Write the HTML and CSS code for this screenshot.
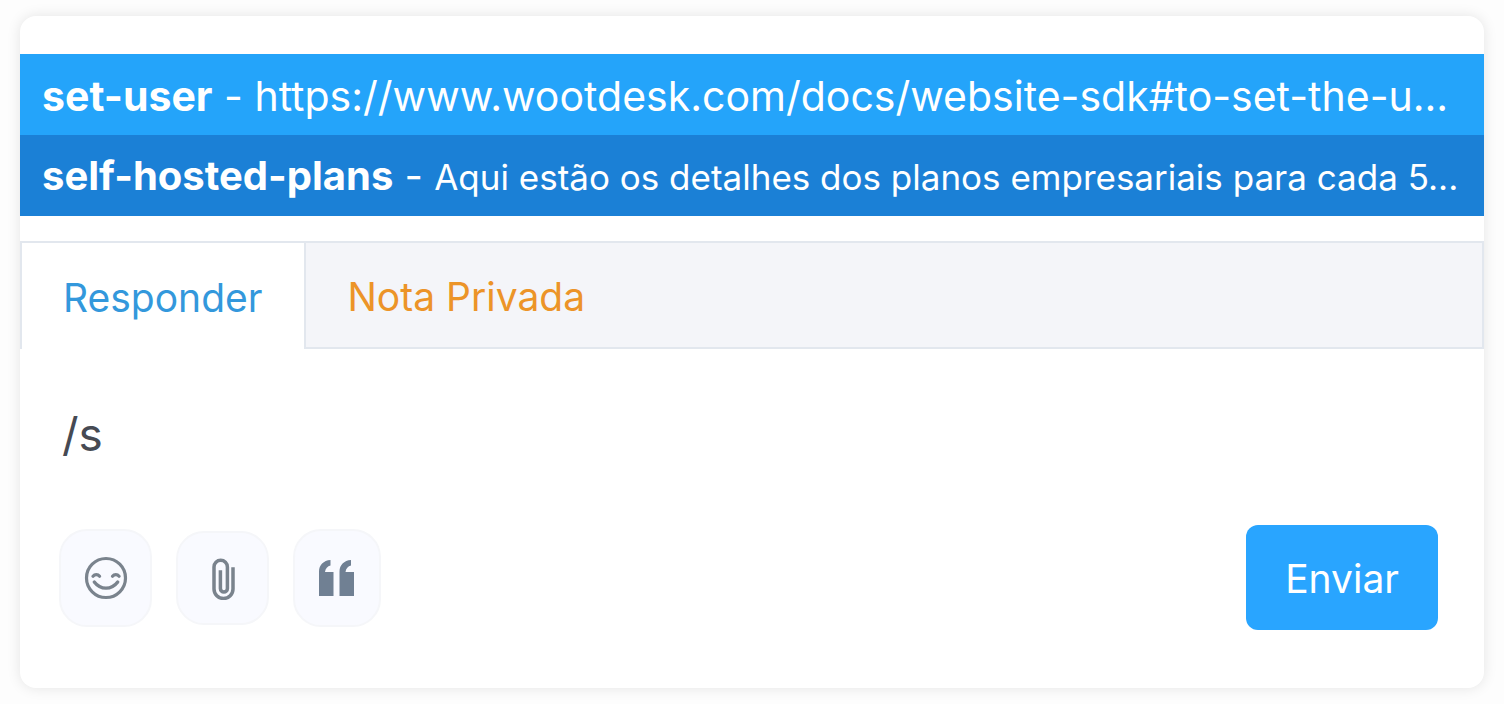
FILE: index.html
```html
<!DOCTYPE html>
<html lang="pt-BR">
<head>
<meta charset="utf-8">
<title>Responder</title>
<link rel="stylesheet" href="styles.css">
</head>
<body>
<main class="reply-box">
  <div class="canned-list" role="listbox" aria-label="Respostas prontas">
    <button class="canned-item" type="button" role="option" aria-selected="false"><strong>set-user</strong> - https://www.wootdesk.com/docs/website-sdk#to-set-the-u...</button>
    <button class="canned-item canned-item-active" type="button" role="option" aria-selected="true"><strong>self-hosted-plans</strong> - <span class="canned-text">Aqui estão os detalhes dos planos empresariais para cada 5...</span></button>
  </div>
  <div class="tabs" role="tablist">
    <button class="tab tab-active" type="button" role="tab" aria-selected="true">Responder</button>
    <button class="tab tab-note" type="button" role="tab" aria-selected="false">Nota Privada</button>
  </div>
  <textarea class="message" aria-label="Mensagem" rows="1">/s</textarea>
  <div class="toolbar">
    <div class="tools">
      <button class="tool" type="button" aria-label="Emoji">
        <svg width="44" height="44" viewBox="0 0 44 44" fill="none" stroke="#7a838d" stroke-linecap="round">
          <circle cx="22" cy="22" r="19.500" stroke-width="3.200"/>
          <path d="M9 20.300c1.800-2.200 4.800-2.200 6.600 0M28.500 20.300c1.800-2.200 4.800-2.200 6.600 0" stroke-width="3.200"/>
          <path d="M10.300 26c6.200 8.200 17.200 8.200 23.400 0" stroke-width="3.400"/>
        </svg>
      </button>
      <button class="tool tool-attach" type="button" aria-label="Anexar arquivo">
        <svg width="44" height="44" viewBox="0 0 44 44" fill="none" stroke="#7a838d" stroke-width="3.500" stroke-linecap="square">
          <path d="M32 14V34a9.500 9.500 0 0 1-19 0V12a6.700 6.700 0 0 1 13.400 0V33.500a3.500 3.500 0 0 1-7 0V17" transform="translate(0 -1)"/>
        </svg>
      </button>
      <button class="tool tool-quote" type="button" aria-label="Respostas prontas">
        <svg width="44" height="44" viewBox="0 0 44 44" fill="#708093">
          <path d="M4 40V15.500C4 9 8.500 4.500 15.500 4v5.500C12.500 10 10.500 12.500 10 16H18.500v24zM24.500 40V15.500C24.500 9 29 4.500 36 4v5.500c-3 .5-5 3-5.500 6.500H39v24z"/>
        </svg>
      </button>
    </div>
    <button class="send" type="button">Enviar</button>
  </div>
</main>
</body>
</html>
```
FILE: styles.css
```css
* {
  box-sizing: border-box;
}

body {
  margin: 0;
  padding: 16px 20px;
  background: #fdfdfd;
  font-family: Inter, "Liberation Sans", sans-serif;
  font-size: 39px;
}

button,
textarea {
  margin: 0;
  border: 0;
  font: inherit;
}

.reply-box {
  padding: 38px 0 58px;
  border-radius: 16px;
  background: #fff;
  box-shadow: 0 0 14px rgba(0, 0, 0, 0.1);
}

.canned-list {
  display: flex;
  flex-direction: column;
}

.canned-item {
  height: 81px;
  padding: 2px 22px 0;
  overflow: hidden;
  background: #24a4fa;
  color: #fff;
  font-size: 41px;
  line-height: 48px;
  text-align: left;
  white-space: nowrap;
}

.canned-item-active {
  background: #1b80d6;
  font-size: 40px;
}

.canned-text {
  font-size: 35px;
}

.tabs {
  display: flex;
  margin-top: 25px;
  border: 2px solid #e2e7ee;
  background: #f4f5f9;
}

.tab {
  padding: 30px 41px 26px;
  background: none;
  line-height: 48px;
}

.tab-active {
  margin-bottom: -2px;
  padding-right: 42px;
  border-right: 2px solid #e2e7ee;
  background: #fff;
  color: #3398dc;
}

.tab-note {
  color: #ec9428;
}

.message {
  display: block;
  width: 100%;
  padding: 53px 42px 59px;
  outline: 0;
  resize: none;
  overflow: hidden;
  background: transparent;
  color: #464a53;
  font-size: 46px;
  line-height: 64px;
}

.toolbar {
  display: flex;
  align-items: center;
  justify-content: space-between;
  padding: 0 46px 0 39px;
}

.tools {
  display: flex;
  align-items: center;
  gap: 24px;
}

.tool {
  display: flex;
  align-items: center;
  justify-content: center;
  width: 93px;
  height: 98px;
  padding: 0;
  border: 2px solid #f5f6f9;
  border-radius: 28px;
  background: #f9faff;
}

.tool-attach {
  height: 94px;
}

.tool-quote {
  width: 88px;
}

.send {
  padding: 29px 39px 27px;
  border-radius: 12px;
  background: #29a5ff;
  color: #fff;
  line-height: 49px;
}
```
